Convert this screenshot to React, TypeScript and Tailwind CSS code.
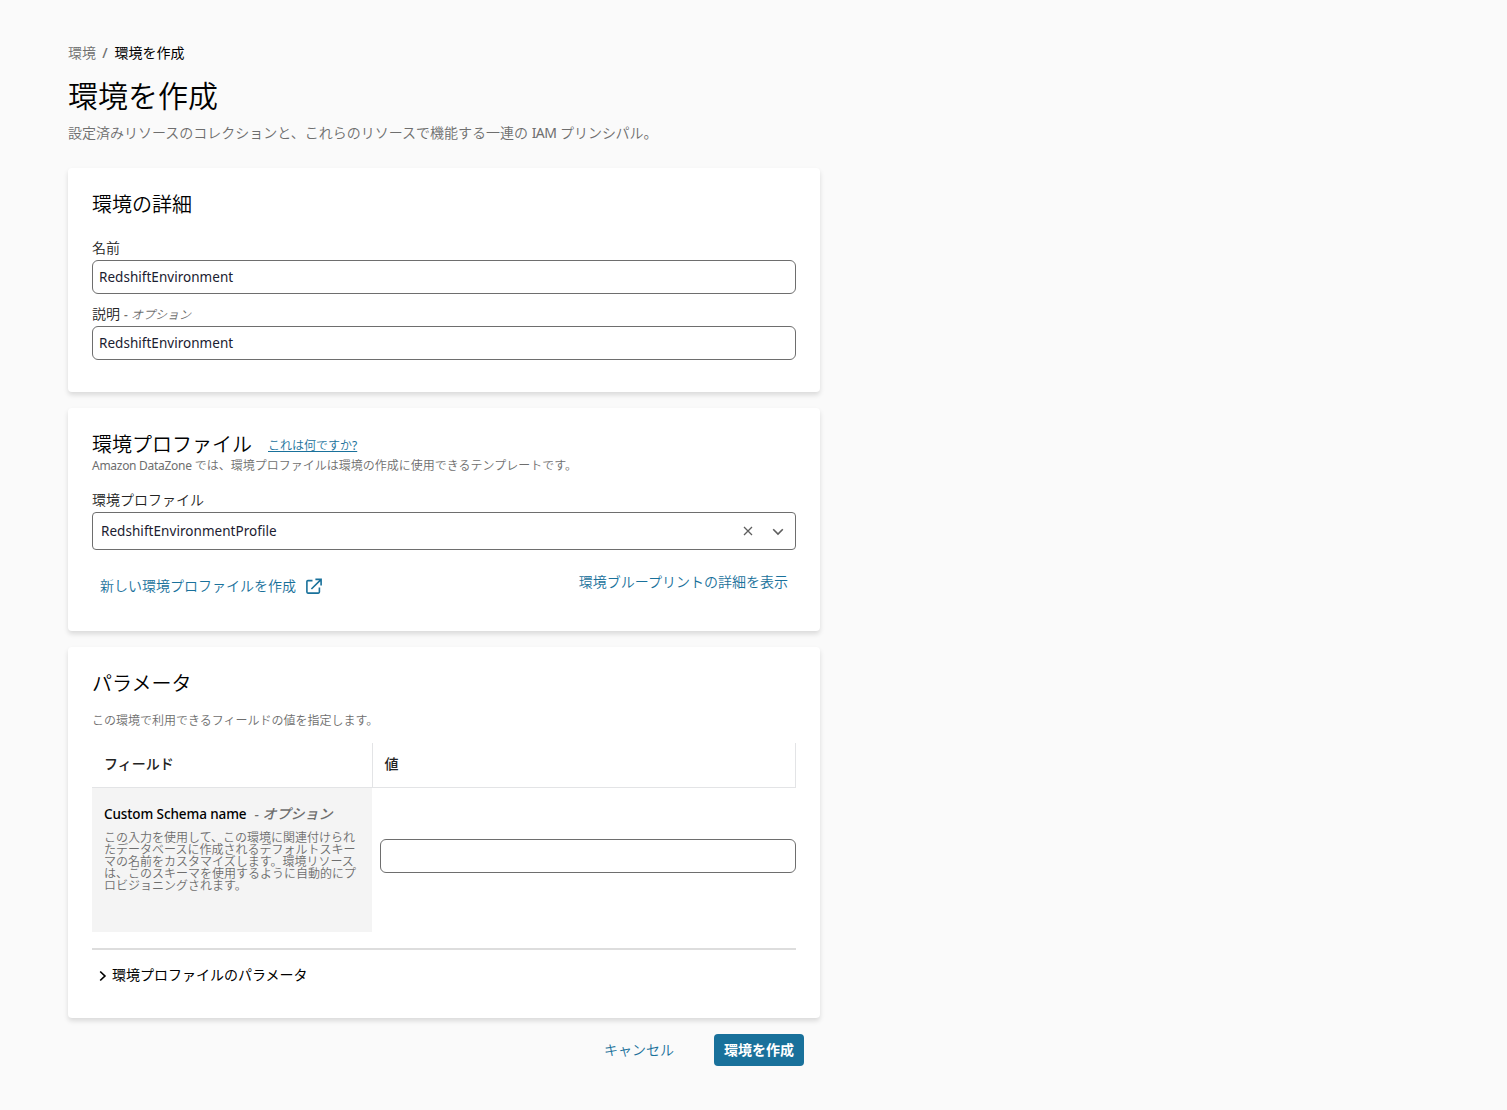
import { useState } from 'react';
import type { ReactNode } from 'react';

function Card({ children, className = '' }: { children: ReactNode; className?: string }) {
  return (
    <section className={`rounded bg-white px-6 pt-[25px] shadow-[0_3px_5px_rgba(0,0,0,0.13)] ${className}`}>
      {children}
    </section>
  );
}

function CardTitle({ children }: { children: ReactNode }) {
  return <h2 className="text-xl leading-6 text-black">{children}</h2>;
}

interface TextInputProps {
  label: string;
  value: string;
  onChange: (value: string) => void;
}

function TextInput({ label, value, onChange }: TextInputProps) {
  return (
    <input
      aria-label={label}
      value={value}
      onChange={(e) => onChange(e.target.value)}
      className="block h-[34px] w-full rounded-md border border-[#6e6e6e] bg-white px-1.5 text-[13.5px] font-[450] tracking-[0.03px] text-[#1b2030] outline-none"
    />
  );
}

function ExternalIcon() {
  return (
    <svg width="18" height="18" viewBox="0 0 18 18" fill="none" stroke="currentColor" strokeWidth="1.6">
      <path d="M7.5 3.6H2.9Q1.9 3.6 1.9 4.6v10.5q0 1 1 1h10.5q1 0 1-1v-4.6" />
      <path d="M10.4 2.4h5.7v6.1M15.9 2.6 6.4 12" />
    </svg>
  );
}

export default function App() {
  const [name, setName] = useState('RedshiftEnvironment');
  const [description, setDescription] = useState('RedshiftEnvironment');
  const [schema, setSchema] = useState('');

  return (
    <div className="min-h-[1110px] bg-[#fafafa] font-['Noto_Sans','Noto_Sans_CJK_JP',sans-serif] text-sm font-[350] text-[#232323]">
      <main className="ml-[68px] w-[752px] pt-[43px]">
        <nav className="flex h-5 items-center leading-5">
          <a className="text-[#6e6e6e]">環境</a>
          <span className="mr-[6.5px] ml-1.5 w-[6px] text-center font-medium text-[#6e6e6e]">/</span>
          <span className="font-normal text-black">環境を作成</span>
        </nav>

        <h1 className="mt-[15px] text-[30px] leading-9 text-black">環境を作成</h1>
        <p className="mt-[9px] leading-5 text-[#6e6e6e]">
          設定済みリソースのコレクションと、これらのリソースで機能する一連の{' '}
          <span className="font-[450] tracking-[-0.6px]">IAM</span> プリンシパル。
        </p>

        {/* Details */}
        <Card className="mt-[25px] pb-8">
          <CardTitle>環境の詳細</CardTitle>
          <div className="mt-5">
            <div className="h-[23px] leading-[22px]">名前</div>
            <TextInput label="名前" value={name} onChange={setName} />
          </div>
          <div className="mt-[9px]">
            <div className="h-[23px] leading-[22px]">
              説明
              <span className="ml-1 text-xs text-[#6e6e6e] italic">
                <span className="font-medium">-</span>&nbsp;オプション
              </span>
            </div>
            <TextInput label="説明" value={description} onChange={setDescription} />
          </div>
        </Card>

        {/* Profile */}
        <Card className="mt-4 pb-7">
          <div className="flex h-[23px] items-start gap-4">
            <CardTitle>環境プロファイル</CardTitle>
            <a className="mt-[3px] text-xs leading-5 text-[#19719b] underline underline-offset-1">
              これは何ですか<span className="font-normal">?</span>
            </a>
          </div>
          <p className="text-xs leading-[19px] text-[#6e6e6e]">
            <span className="font-[450] tracking-[-0.28px]">Amazon DataZone</span> では、環境プロファイルは環境の作成に使用できるテンプレートです。
          </p>

          <div className="mt-[14px] h-[23px] leading-[22px]">環境プロファイル</div>
          <div className="flex h-[38px] items-center rounded border border-[#6e6e6e] pr-2.5 pl-2">
            <span className="flex-1 pt-px text-[13.5px] font-[450] tracking-[0.05px] text-[#1b2030]">
              RedshiftEnvironmentProfile
            </span>
            <svg width="14" height="14" viewBox="0 0 14 14" className="mr-4 text-[#5e5e5e]" fill="none" stroke="currentColor" strokeWidth="1.3">
              <path d="M3 3l8 8M11 3l-8 8" />
            </svg>
            <svg width="14" height="14" viewBox="0 0 14 14" className="text-[#5e5e5e]" fill="none" stroke="currentColor" strokeWidth="1.6">
              <path d="M2.2 5.2 7 10l4.8-4.8" />
            </svg>
          </div>

          <div className="mt-4 flex items-start justify-between px-2 pb-px text-[#19719b]">
            <button className="mt-1 flex h-8 items-center gap-[9px]">
              新しい環境プロファイルを作成
              <ExternalIcon />
            </button>
            <button className="h-8">環境ブループリントの詳細を表示</button>
          </div>
        </Card>

        {/* Parameters */}
        <Card className="mt-4 pb-8">
          <CardTitle>パラメータ</CardTitle>
          <p className="mt-[15px] text-xs leading-5 text-[#6e6e6e]">この環境で利用できるフィールドの値を指定します。</p>

          <div className="mt-3 grid grid-cols-[280px_1fr]">
            <div className="flex h-[45px] items-center border-b border-[#e3e4e6] px-3 pb-0.5 font-medium">フィールド</div>
            <div className="flex h-[45px] items-center border-x border-b border-[#e3e4e6] px-[11.5px] pb-0.5 font-medium">値</div>
            <div className="h-36 bg-[#f4f4f4] px-3 pt-4">
              <div className="leading-5 font-medium whitespace-pre text-black">
                <span className="text-[13.5px] tracking-[-0.1px]">Custom Schema name</span>
                <span className="ml-2 text-[#6e6e6e] italic">-&nbsp;オプション</span>
              </div>
              <p className="mt-2 text-xs leading-3 text-[#6e6e6e]">
                この入力を使用して、この環境に関連付けられ
                <br />
                たデータベースに作成されるデフォルトスキー
                <br />
                マの名前をカスタマイズします。環境リソース
                <br />
                は、このスキーマを使用するように自動的にプ
                <br />
                ロビジョニングされます。
              </p>
            </div>
            <div className="pt-[51px] pl-2">
              <TextInput label="Custom Schema name" value={schema} onChange={setSchema} />
            </div>
          </div>

          <hr className="mt-4 border-t-2 border-[#dddddd]" />

          <button className="mt-[15px] mb-px flex h-5 items-center gap-1 pl-1 leading-5 font-normal text-black">
            <svg width="12" height="12" viewBox="0 0 12 12" className="mt-px" fill="none" stroke="currentColor" strokeWidth="1.7">
              <path d="M4.2 1.5 8.9 6 4.2 10.5" />
            </svg>
            環境プロファイルのパラメータ
          </button>
        </Card>

        <div className="mt-4 flex justify-end gap-[30px] pr-4">
          <button className="h-8 px-2.5 pb-px text-[#19719b]">キャンセル</button>
          <button className="h-8 rounded bg-[#19719b] px-2.5 pb-px font-bold text-white">環境を作成</button>
        </div>
      </main>
    </div>
  );
}
